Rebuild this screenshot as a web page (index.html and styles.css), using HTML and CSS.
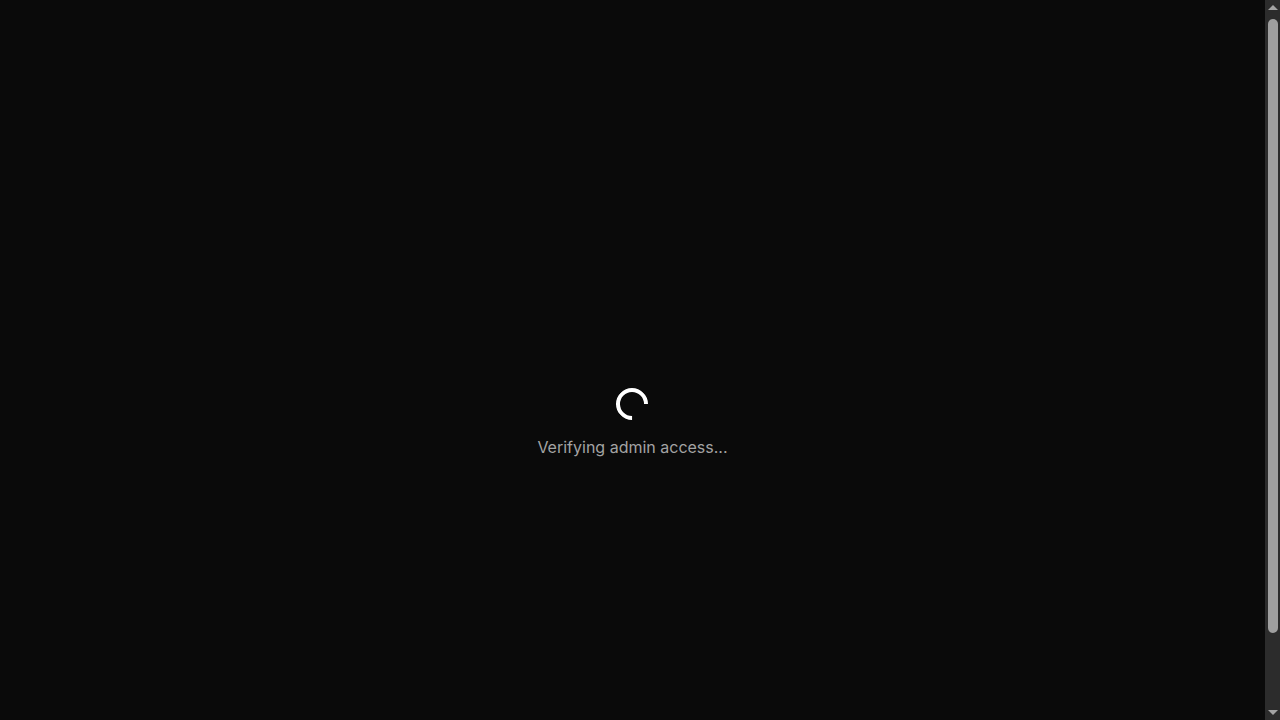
FILE: index.html
```html
<!DOCTYPE html>
<html lang="en">
<head>
<meta charset="utf-8">
<title>Admin</title>
<link rel="stylesheet" href="styles.css">
</head>
<body>
<div class="frame">
  <main class="screen">
    <div class="loader">
      <div class="spinner"></div>
      <p class="label">Verifying admin access...</p>
    </div>
  </main>
  <div class="scrollbar" aria-hidden="true">
    <div class="arrow arrow-up"></div>
    <div class="track">
      <div class="thumb"></div>
    </div>
    <div class="arrow arrow-down"></div>
  </div>
</div>
</body>
</html>
```
FILE: styles.css
```css
html {
  background: #0a0a0a;
}
body {
  margin: 0;
  background: #0a0a0a;
  font-family: Inter, "Noto Sans", sans-serif;
  overflow: hidden;
}
.frame {
  display: flex;
  height: 100vh;
}
.screen {
  flex: 1;
  box-sizing: border-box;
  padding-top: 126px;
  display: flex;
  align-items: center;
  justify-content: center;
}
.loader {
  display: flex;
  flex-direction: column;
  align-items: center;
}
.spinner {
  width: 32px;
  height: 32px;
  box-sizing: border-box;
  border: 4px solid #ffffff;
  border-right-color: transparent;
  border-radius: 50%;
  transform: rotate(45deg);
  margin-bottom: 15px;
}
.label {
  margin: 0;
  font-size: 16px;
  line-height: 24px;
  color: #a3a3a3;
}
.scrollbar {
  width: 15px;
  background: #2c2c2c;
  display: flex;
  flex-direction: column;
  align-items: center;
}
.arrow {
  width: 15px;
  height: 17px;
  display: flex;
  align-items: center;
  justify-content: center;
  flex: none;
}
.arrow::before {
  content: "";
  width: 0;
  height: 0;
  border-left: 5px solid transparent;
  border-right: 5px solid transparent;
}
.arrow-up::before {
  border-bottom: 5px solid #a3a3a3;
  margin-top: -2px;
}
.arrow-down::before {
  border-top: 5px solid #a3a3a3;
  margin-top: 2px;
}
.track {
  flex: 1;
  width: 15px;
  display: flex;
  justify-content: center;
}
.thumb {
  width: 10px;
  height: 614px;
  margin-top: 2px;
  border-radius: 5px;
  background: #9f9f9f;
}
```
